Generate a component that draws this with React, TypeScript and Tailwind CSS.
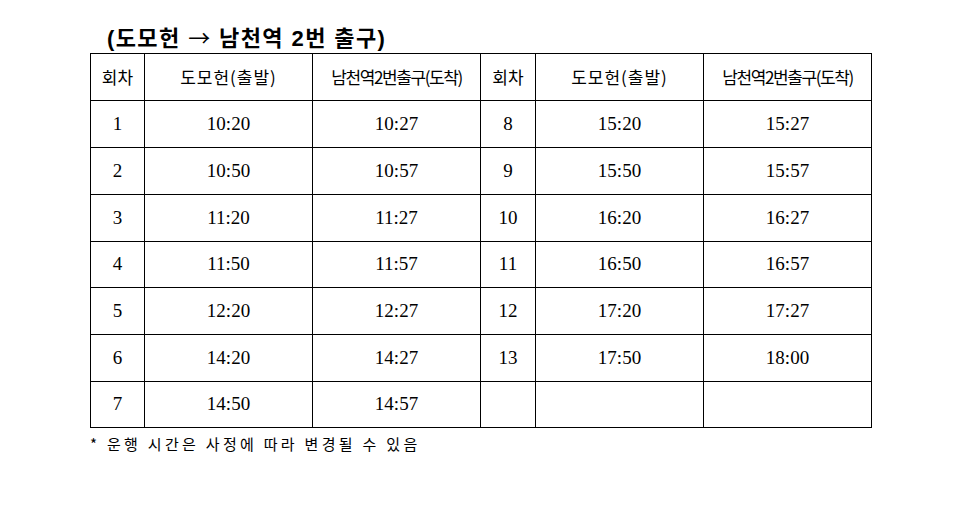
const rows: [string, string, string, string, string, string][] = [
  ["1", "10:20", "10:27", "8", "15:20", "15:27"],
  ["2", "10:50", "10:57", "9", "15:50", "15:57"],
  ["3", "11:20", "11:27", "10", "16:20", "16:27"],
  ["4", "11:50", "11:57", "11", "16:50", "16:57"],
  ["5", "12:20", "12:27", "12", "17:20", "17:27"],
  ["6", "14:20", "14:27", "13", "17:50", "18:00"],
  ["7", "14:50", "14:57", "", "", ""],
];

const rowHeights = ["h-[47px]", "h-[47px]", "h-[47px]", "h-[46px]", "h-[47px]", "h-[47px]", "h-[46px]"];

const kr = "font-['Noto_Sans_CJK_KR',sans-serif]";
const num = "font-['Liberation_Serif','Noto_Sans_CJK_KR',serif]";

const HeaderCells = () => (
  <>
    <th className={`border border-black font-normal text-[17px] ${kr}`}>회차</th>
    <th className={`border border-black font-normal text-[17px] tracking-[1px] ${kr}`}>도모헌(출발)</th>
    <th className={`border border-black font-normal text-[17px] tracking-[-1.4px] ${kr}`}>남천역2번출구(도착)</th>
  </>
);

export default function App() {
  return (
    <div className="w-[977px] h-[507px] bg-white text-black">
      <div className="pl-[90px] pt-[21px]">
        <h1 className="pl-[17px] h-[32px] text-[22px] leading-[30px] font-bold font-['Liberation_Sans','Noto_Sans_CJK_KR',sans-serif] tracking-[1.4px]">
          (도모헌 <span className="font-['Noto_Sans_CJK_KR',sans-serif] font-normal">→</span> 남천역 2번 출구)
        </h1>
        <table className="border-collapse table-fixed w-[781px]">
          <colgroup>
            <col className="w-[54px]" />
            <col className="w-[168px]" />
            <col className="w-[168px]" />
            <col className="w-[55px]" />
            <col className="w-[168px]" />
            <col className="w-[168px]" />
          </colgroup>
          <thead>
            <tr className="h-[47px]">
              <HeaderCells />
              <HeaderCells />
            </tr>
          </thead>
          <tbody>
            {rows.map((r, i) => (
              <tr key={i} className={rowHeights[i]}>
                {r.map((c, j) => (
                  <td key={j} className={`border border-black text-center text-[19px] ${num}`}>
                    {c}
                  </td>
                ))}
              </tr>
            ))}
          </tbody>
        </table>
        <p className={`mt-[5px] text-[15px] leading-[22px] tracking-[3.3px] ${kr}`}>
          * 운행 시간은 사정에 따라 변경될 수 있음
        </p>
      </div>
    </div>
  );
}
